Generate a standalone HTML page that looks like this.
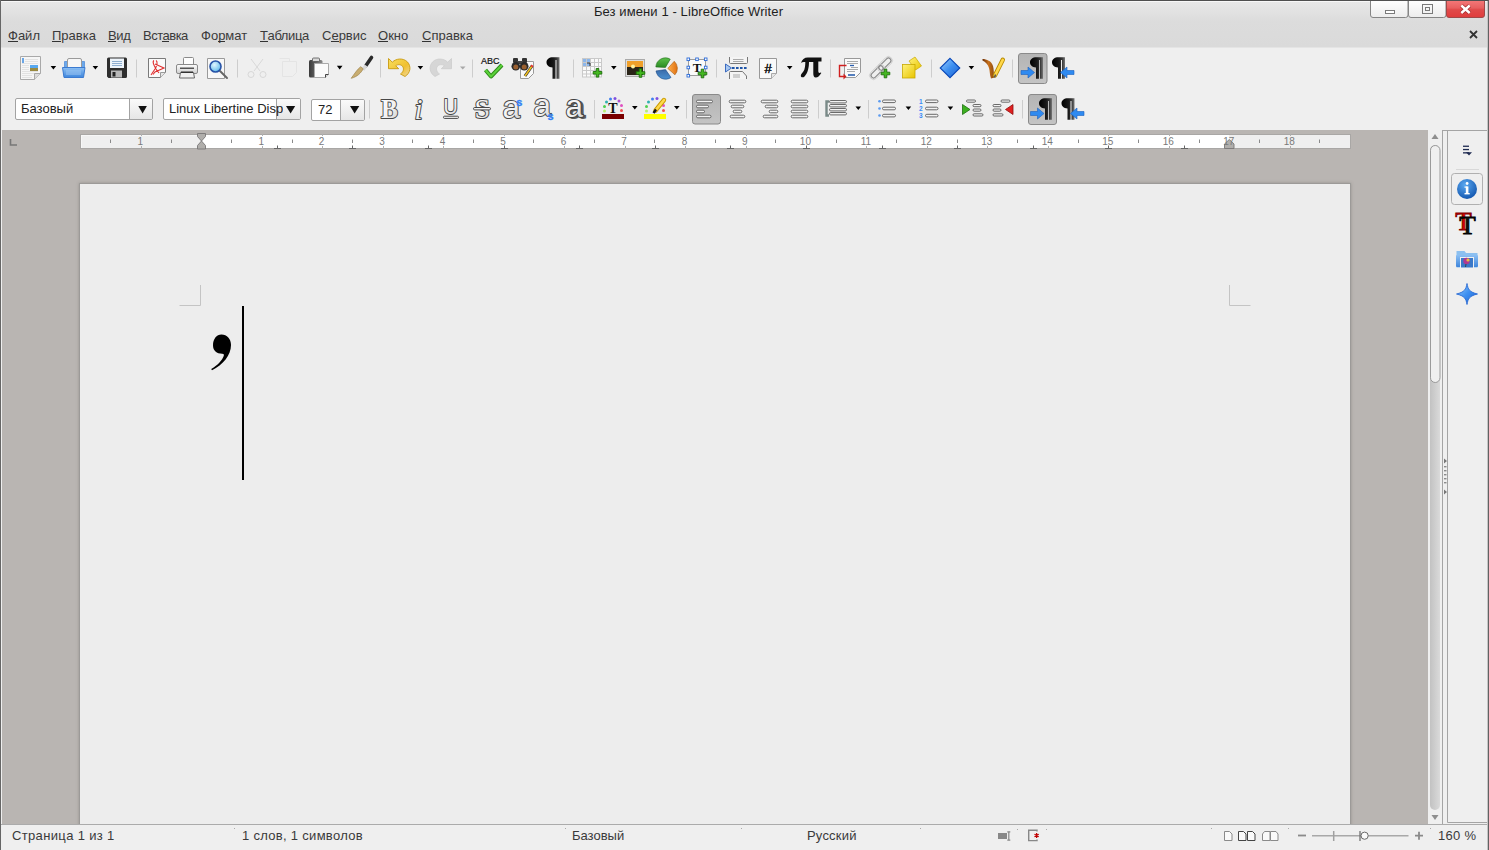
<!DOCTYPE html>
<html><head><meta charset="utf-8">
<style>
*{margin:0;padding:0;box-sizing:border-box}
html,body{width:1489px;height:850px;overflow:hidden;background:#efefef;font-family:"Liberation Sans",sans-serif;color:#222}
.a{position:absolute}
#frame{position:absolute;left:0;top:0;width:1489px;height:850px;overflow:hidden}
#titlebar{position:absolute;left:0;top:0;width:1489px;height:48px;background:linear-gradient(#f8f8f8 0px,#f8f8f8 2px,#e8e8e8 2px,#dcdcdc 21px,#dadada 47px,#e4e4e4 47px)}
#title{position:absolute;left:0;width:1377px;top:4px;line-height:16px;text-align:center;font-size:13px;color:#1e1e1e;letter-spacing:0.1px}
.menu{position:absolute;top:28px;font-size:13px;color:#3a3a3a;line-height:15px}
.menu u{text-decoration:none;position:relative}
.menu u:after{content:"";position:absolute;left:0;right:0;top:13px;height:1px;background:#333}
#tb{position:absolute;left:0;top:48px;width:1489px;height:82px;background:#efefef}
#docarea{position:absolute;left:2px;top:130px;width:1426px;height:694px;background:#b9b5b2}
#page{position:absolute;left:79px;top:183px;width:1272px;height:660px;background:#ededed;border:1px solid #9c9a98;box-shadow:0 0 3px rgba(90,85,80,0.35)}
#status{position:absolute;left:0;top:824px;width:1489px;height:26px;background:#efefef;border-top:1px solid #ababab}
.st{position:absolute;top:3px;font-size:13px;color:#3a3a3a;line-height:16px}
.combo{position:absolute;background:#fff;border:1px solid #a3a3a3;border-radius:2px;overflow:hidden}
.combo .txt{position:absolute;left:5px;top:2px;font-size:13px;color:#222;white-space:nowrap;line-height:16px}
.combo .btn{position:absolute;top:0;bottom:0;right:0;background:linear-gradient(#fafafa,#e6e6e6);border-left:1px solid #a3a3a3}
#ruler{position:absolute;left:80px;top:134px;width:1271px;height:15px;background:#fff;border:1px solid #a9a7a5}
.rn{position:absolute;top:135px;font-size:10px;color:#7c7c7c;line-height:12px}
#scroll{position:absolute;left:1428px;top:130px;width:14px;height:694px;background:#efefef}
#sidebar{position:absolute;left:1442px;top:130px;width:46px;height:694px;background:#efefef;border-top:1px solid #a4a4a4}
</style></head><body>
<div id="frame">
 <div id="titlebar"></div>
 <div id="title">Без имени 1 - LibreOffice Writer</div>
 <div class="menu" style="left:8px"><u>Ф</u>айл</div>
 <div class="menu" style="left:52px"><u>П</u>равка</div>
 <div class="menu" style="left:108px;letter-spacing:-0.4px"><u>В</u>ид</div>
 <div class="menu" style="left:143px;letter-spacing:-0.5px">Вст<u>а</u>вка</div>
 <div class="menu" style="left:201px">Фо<u>р</u>мат</div>
 <div class="menu" style="left:260px;letter-spacing:-0.4px"><u>Т</u>аблица</div>
 <div class="menu" style="left:322px">С<u>е</u>рвис</div>
 <div class="menu" style="left:378px"><u>О</u>кно</div>
 <div class="menu" style="left:422px"><u>С</u>правка</div>
 <div id="tb"></div>
 <div class="combo" style="left:15px;top:98px;width:138px;height:22px"><div class="txt">Базовый</div><div class="btn" style="width:23px"></div></div>
 <div class="combo" style="left:163px;top:98px;width:138px;height:22px"><div class="btn" style="width:24px"></div><div class="txt" style="width:114px;overflow:hidden">Linux Libertine Disp</div></div>
 <div class="combo" style="left:311px;top:99px;width:54px;height:22px"><div class="txt" style="left:6px">72</div><div class="btn" style="width:24px"></div></div>
 <div id="docarea"></div>
 <div id="ruler"></div>
 <div id="page"></div>
 <div id="scroll"></div>
 <div id="sidebar"></div>
 <div id="status">
  <div class="st" style="left:12px;letter-spacing:0.35px">Страница 1 из 1</div>
  <div class="st" style="left:242px;letter-spacing:0.3px">1 слов, 1 символов</div>
  <div class="st" style="left:572px">Базовый</div>
  <div class="st" style="left:807px;letter-spacing:0.2px">Русский</div>
  <div class="st" style="left:1438px;letter-spacing:0.3px">160 %</div>
 </div>
 <svg class="a" style="left:0;top:0" width="1489" height="850" viewBox="0 0 1489 850">
<defs>
 <linearGradient id="gBlue" x1="0" y1="0" x2="0" y2="1"><stop offset="0" stop-color="#8cc0f4"/><stop offset="1" stop-color="#3f86dc"/></linearGradient>
 <linearGradient id="gDia" x1="0" y1="0" x2="1" y2="1"><stop offset="0" stop-color="#9fd0ff"/><stop offset="0.5" stop-color="#3d8ff0"/><stop offset="1" stop-color="#1d5fcf"/></linearGradient>
 <linearGradient id="gGray" x1="0" y1="0" x2="0" y2="1"><stop offset="0" stop-color="#fdfdfd"/><stop offset="1" stop-color="#cfcfcf"/></linearGradient>
 <linearGradient id="gDark" x1="0" y1="0" x2="1" y2="0"><stop offset="0" stop-color="#3a3a3a"/><stop offset="1" stop-color="#8a8a8a"/></linearGradient>
 <linearGradient id="gPress" x1="0" y1="0" x2="0" y2="1"><stop offset="0" stop-color="#b4b4b4"/><stop offset="1" stop-color="#c4c4c4"/></linearGradient>
 <linearGradient id="gYel" x1="0" y1="0" x2="1" y2="1"><stop offset="0" stop-color="#fff27a"/><stop offset="1" stop-color="#e8c400"/></linearGradient>
 <linearGradient id="gUndo" x1="0" y1="0" x2="1" y2="1"><stop offset="0" stop-color="#f8e060"/><stop offset="0.6" stop-color="#f0c030"/><stop offset="1" stop-color="#f0d8a0"/></linearGradient>
 <linearGradient id="gPil" x1="0" y1="0" x2="1" y2="0"><stop offset="0" stop-color="#000"/><stop offset="0.55" stop-color="#1a1a1a"/><stop offset="0.8" stop-color="#3a3a3a"/><stop offset="1" stop-color="#777"/></linearGradient>
 <linearGradient id="gThumb" x1="0" y1="0" x2="1" y2="0"><stop offset="0" stop-color="#c2c2c2"/><stop offset="1" stop-color="#dadada"/></linearGradient>
 <radialGradient id="gInfo" cx="0.4" cy="0.3" r="0.8"><stop offset="0" stop-color="#5aa8f0"/><stop offset="1" stop-color="#0c4ea8"/></radialGradient>
 <radialGradient id="gLens" cx="0.4" cy="0.35" r="0.7"><stop offset="0" stop-color="#e0f6ff"/><stop offset="1" stop-color="#5ab8ea"/></radialGradient>
 <g id="plus"><path d="M-1.3,-4.3h2.6v3h3v2.6h-3v3h-2.6v-3h-3v-2.6h3z" fill="#44b820" stroke="#1d6e0a" stroke-width="0.9"/></g>
 <g id="dd"><path d="M0,0h5.6l-2.8,3.6z" fill="#000"/></g>
<linearGradient id="gGreen" x1="0" y1="0" x2="0" y2="1"><stop offset="0" stop-color="#5cc04a"/><stop offset="1" stop-color="#2a8a22"/></linearGradient>
<linearGradient id="gOr" x1="0" y1="0" x2="1" y2="0"><stop offset="0" stop-color="#ffb050"/><stop offset="1" stop-color="#e07010"/></linearGradient>
<linearGradient id="gBl2" x1="0" y1="0" x2="0" y2="1"><stop offset="0" stop-color="#3a6aa8"/><stop offset="1" stop-color="#4a90d0"/></linearGradient>
</defs>

<!-- ===== Toolbar 1 ===== -->
<!-- new doc -->
<path d="M20.5,56.5H40.5V73.5L34.5,79.5H20.5Z" fill="#f6f6f6" stroke="#a9a9a9"/>
<path d="M34.5,79.5V73.5H40.5" fill="#dcdcdc" stroke="#a9a9a9"/>
<rect x="22" y="58" width="2" height="5" fill="#6aa6e6"/>
<g stroke="#e2e2e2" stroke-width="1"><path d="M25,59.5h13M25,61.5h13M22,63.5h16M22,65.5h7M22,67.5h7M22,69.5h7M22,71.5h16M22,73.5h12M22,75.5h10M22,77.5h10"/></g>
<rect x="30" y="65" width="8" height="3" fill="#58a8ee"/><rect x="30" y="68" width="8" height="3" fill="#9a8a40"/>
<use href="#dd" x="50.6" y="66"/>
<!-- open -->
<path d="M64.5,61.5h3v7h-3zM81.5,61.5h3v7h-3z" fill="#6aa8ec" stroke="#3b7ad0" stroke-width="0.6"/>
<path d="M67.5,68.5V60a1.5,1.5 0 0 1 1.5,-1.5h11a1.5,1.5 0 0 1 1.5,1.5v8.5" fill="#f6f6f6" stroke="#9a9a9a"/>
<path d="M62.5,67.5h22.5l-1.5,10h-19.5z" fill="url(#gBlue)" stroke="#3b7ad0"/>
<rect x="66" y="70" width="15" height="5" fill="#9cc6f2" opacity="0.5"/>
<use href="#dd" x="92.6" y="66"/>
<!-- save -->
<path d="M107,59a1.5,1.5 0 0 1 1.5,-1.5h17a1.5,1.5 0 0 1 1.5,1.5v17.5a1.5,1.5 0 0 1 -1.5,1.5h-17l-1.5,-1.5z" fill="#2e2e2e"/>
<rect x="110" y="58.5" width="14" height="9.5" fill="#eef4fa"/>
<path d="M112,61.5h10M112,63.5h10M112,65.5h10" stroke="#8eaed0" stroke-width="1"/>
<rect x="111" y="70.5" width="11" height="7" fill="#b8b8b8"/><rect x="112.5" y="72" width="3" height="4.5" fill="#222"/>
<path d="M136.5,59.5v18" stroke="#cdcdcd"/>
<!-- pdf -->
<path d="M148.5,58.5H165.5V72.5L160.5,77.5H148.5Z" fill="#fafafa" stroke="#7a7a7a"/>
<path d="M160.5,77.5V72.5H165.5" fill="#e6e6e6" stroke="#9a9a9a"/>
<path d="M154,60.5c-2,1 0,5 2,8.5l3,4M156,60.5c2,1 1,5 -1,8.5l-4,6M153,74.5l2,-2.5l9,-4l-9,-4" fill="none" stroke="#e03030" stroke-width="1.1"/>
<!-- print -->
<rect x="183.5" y="57.5" width="10" height="8" rx="1" fill="#fdfdfd" stroke="#8a8a8a"/>
<rect x="176.5" y="64.5" width="21" height="9" rx="1.5" fill="url(#gGray)" stroke="#8a8a8a"/>
<rect x="180" y="67.5" width="14" height="1.5" fill="#555"/>
<path d="M180.5,72.5h13l1,5.5h-15z" fill="#f0f0f0" stroke="#666"/>
<rect x="181" y="71.5" width="12" height="1.5" fill="#333"/>
<!-- preview -->
<path d="M207.5,58.5H224.5V78.5H207.5Z" fill="#f8f8f8" stroke="#9a9a9a"/>
<path d="M220,71l7,7" stroke="#666" stroke-width="2" stroke-linecap="round"/>
<circle cx="215.5" cy="66.5" r="5.5" fill="url(#gLens)" stroke="#2854a8" stroke-width="1.6"/>
<path d="M237.5,59.5v18" stroke="#cdcdcd"/>
<!-- cut disabled -->
<g fill="none" stroke="#d8d8d8" stroke-width="1"><path d="M251,59l9,12M263,59l-9,12"/><circle cx="251" cy="74.5" r="3"/><circle cx="263" cy="74.5" r="3"/></g>
<!-- copy disabled -->
<g fill="none" stroke="#e4e4e4"><path d="M279.5,58.5h10v3M282.5,61.5h14v11l-4,4h-10z"/></g>
<!-- paste -->
<rect x="309" y="60" width="13.5" height="17.5" rx="1.5" fill="url(#gDark)"/>
<rect x="312.5" y="58" width="7" height="3.5" rx="1" fill="#d8d8d8" stroke="#555" stroke-width="0.8"/>
<path d="M314.5,63.5H328.5V74.5L325.5,77.5H314.5Z" fill="#fbfbfb" stroke="#aaa"/>
<path d="M325.5,77.5V74.5H328.5" fill="#ddd" stroke="#444"/>
<use href="#dd" x="336.9" y="65.8"/>
<!-- brush -->
<path d="M371.5,57.5l-5.5,8" stroke="#2a2a2a" stroke-width="3.6" stroke-linecap="round"/>
<path d="M366,65.5l-3,4.2" stroke="#d8d8d8" stroke-width="3.4"/>
<path d="M363.2,68.8c-2,4 -6,8 -12,9.5c3,-4 6,-9 9.5,-11.6z" fill="#c8ad70" stroke="#9e8348" stroke-width="0.7"/>
<path d="M380.5,59.5v18" stroke="#cdcdcd"/>
<!-- undo -->
<path d="M388.5,58.5L392.3,62.2C396,58.5 403,57.5 407.5,62C411.5,66.5 410.5,73 405,76.5L400.5,74C403.5,72 404.3,68.5 402.5,66.3C400.5,64 397.5,64.3 395.7,65.8L398.7,68.7L388.5,68.7Z" fill="url(#gUndo)" stroke="#c89a10" stroke-width="0.9" stroke-linejoin="round"/>
<use href="#dd" x="417.6" y="66"/>
<!-- redo disabled -->
<path d="M388.5,58.5L392.3,62.2C396,58.5 403,57.5 407.5,62C411.5,66.5 410.5,73 405,76.5L400.5,74C403.5,72 404.3,68.5 402.5,66.3C400.5,64 397.5,64.3 395.7,65.8L398.7,68.7L388.5,68.7Z" transform="translate(840 0) scale(-1 1)" fill="#d6d6d6" stroke="#cacaca" stroke-width="0.7"/>
<path d="M460,66.5h5.5l-2.75,3z" fill="#a8a8a8"/>
<path d="M472.5,59.5v18" stroke="#cdcdcd"/>
<!-- spell -->
<text x="481" y="63.9" font-family="Liberation Sans" font-size="9" fill="#111" stroke="#111" stroke-width="0.2">ABC</text>
<path d="M485.5,70l5.5,6.5l11,-11.5" fill="none" stroke="#2f8a1a" stroke-width="4" stroke-linejoin="round"/>
<path d="M485.5,70l5.5,6.5l11,-11.5" fill="none" stroke="#5bd23a" stroke-width="2" stroke-linejoin="round"/>
<!-- find replace -->
<path d="M520.5,61.5h13v12l-5,5h-8z" fill="#fafafa" stroke="#9a9a9a"/>
<path d="M532,66l-7,10" stroke="#333" stroke-width="3"/><path d="M532,66l-7,10" stroke="#f0c020" stroke-width="1.6"/><path d="M532.5,65.3l-1,1.4" stroke="#e03030" stroke-width="2.6"/>
<rect x="513" y="58" width="5" height="5" rx="1" fill="#333"/><rect x="522" y="58" width="5" height="5" rx="1" fill="#333"/><rect x="517" y="61" width="6" height="3" fill="#444"/>
<circle cx="515.8" cy="66.3" r="4.3" fill="#2a2a2a"/><circle cx="524.2" cy="66.3" r="4.3" fill="#2a2a2a"/>
<circle cx="515.8" cy="67" r="2.5" fill="#9a6030"/><circle cx="524.2" cy="67" r="2.5" fill="#9a6030"/>
<!-- pilcrow -->
<path d="M553,57.2H559.5V78.8H556.5V60H555.5V78.8H552.5V67.5C548.5,67.5 546.5,65 546.5,62.3C546.5,59.3 549,57.2 553,57.2Z" fill="url(#gPil)"/>
<path d="M573.5,59.5v18" stroke="#cdcdcd"/>
<!-- table -->
<g stroke="#c9c9c9" stroke-width="1" fill="#fafafa"><rect x="582.5" y="58.5" width="19" height="18.5"/></g>
<rect x="583" y="59" width="8" height="7" fill="#8cb6ea"/>
<g stroke="#c9c9c9"><path d="M586.5,58.5v18.5M590.5,58.5v18.5M594.5,58.5v18.5M598.5,58.5v18.5M582.5,62.5h19M582.5,66.5h19M582.5,70.5h19M582.5,74h19"/></g>
<path d="M587,63h3v3" stroke="#333" fill="none"/>
<use href="#plus" x="597.5" y="72.8"/>
<use href="#dd" x="611" y="66"/>
<!-- image -->
<rect x="625.5" y="59.5" width="19" height="17" fill="#ddd" stroke="#aaa"/>
<rect x="627" y="61" width="16" height="6" fill="#f0a02a"/><rect x="627" y="67" width="16" height="8" fill="#2a2418"/>
<circle cx="633" cy="66.5" r="2" fill="#fff2a0"/>
<use href="#plus" x="640.5" y="73"/>
<!-- chart -->
<path d="M665.43,67.45L655.84,66.94A9.6,9.6 0 0 1 670.23,59.13Z" fill="url(#gGreen)" stroke="#1e6a18" stroke-width="0.6"/>
<path d="M667.80,68.41L674.22,61.27A9.6,9.6 0 0 1 674.93,74.83Z" fill="url(#gOr)" stroke="#a85a10" stroke-width="0.6"/>
<path d="M665.52,69.60L671.03,77.46A9.6,9.6 0 0 1 656.01,70.94Z" fill="url(#gBl2)" stroke="#1a4a88" stroke-width="0.6"/>
<!-- text box -->
<rect x="688.5" y="59.5" width="17" height="16" fill="#fbfbfb" stroke="#888" stroke-width="0.8"/>
<text x="697" y="72" font-family="Liberation Serif" font-weight="bold" font-size="13" text-anchor="middle" fill="#111">T</text>
<g fill="#fff" stroke="#2a6ad8" stroke-width="0.9"><rect x="687" y="58" width="2.6" height="2.6"/><rect x="695.7" y="58" width="2.6" height="2.6"/><rect x="704.4" y="58" width="2.6" height="2.6"/><rect x="687" y="66.2" width="2.6" height="2.6"/><rect x="704.4" y="66.2" width="2.6" height="2.6"/><rect x="687" y="74.4" width="2.6" height="2.6"/></g>
<use href="#plus" x="702.5" y="73.5"/>
<path d="M716.5,59.5v18" stroke="#cdcdcd"/>
<!-- page break -->
<path d="M729.5,57v5.5a1,1 0 0 0 1,1h16a1,1 0 0 0 1,-1V57" fill="#f4f4f4" stroke="#777"/>
<path d="M733,59.5h10.5M733,61.5h10.5" stroke="#aaa"/>
<path d="M732,68h16" stroke="#1f55a8" stroke-width="1.8" stroke-dasharray="2.6,1.4"/>
<path d="M725.5,64l6,4l-6,4z" fill="#a8c8f0" stroke="#3a6ac0"/>
<path d="M729.5,79v-6.5a1,1 0 0 1 1,-1h12l4,4.5v3" fill="#f4f4f4" stroke="#777"/>
<path d="M733,75h7M733,77h7" stroke="#aaa"/>
<!-- field -->
<path d="M759.5,58.5H776.5V73.5L771.5,78.5H759.5Z" fill="#fafafa" stroke="#999"/>
<path d="M771.5,78.5V73.5H776.5" fill="#e6e6e6" stroke="#aaa"/>
<text x="768" y="72.5" font-family="Liberation Sans" font-size="13" text-anchor="middle" fill="#000" stroke="#000" stroke-width="0.4">#</text>
<use href="#dd" x="786.9" y="66"/>
<!-- pi -->
<path d="M801,63c1,-4 4,-6 8,-5.5h12.5v4h-3.2v9.5c0,2 1,2.5 2.5,1.5l0.5,0.6c-2,3 -3.5,4.5 -5.5,4.5c-2,0 -2.5,-2 -2.5,-4v-11.6h-4.3c0,5 -1,11 -4.5,14.5c-1.2,1.2 -3.5,1.3 -3.7,-0.8c0,-2 2.5,-3.5 3.5,-6c0.8,-2.5 1,-5 1,-7.7h-1.5c-2.2,0 -3.2,1 -3.8,2.3z" fill="#111"/>
<path d="M830.5,59.5v18" stroke="#cdcdcd"/>
<!-- cross ref -->
<path d="M844.5,58.5H860.5V72.5L855.5,77.5H844.5Z" fill="#fafafa" stroke="#999"/>
<g stroke="#aaa"><path d="M847,61.5h11M847,63.5h11M851,67.5h7M847,69.5h11M847,71.5h8"/></g>
<path d="M850,65.5h4" stroke="#2a5fb0" stroke-width="1.3"/><path d="M848,75h7" stroke="#2a5fb0" stroke-width="1.6"/>
<path d="M846.5,65.5h-7v11h5" fill="none" stroke="#d02020" stroke-width="1.4"/>
<path d="M843.5,73.5l3,3l-3,3z" fill="#d02020"/>
<!-- hyperlink disabled-ish -->
<g fill="none" stroke="#8a8a8a" stroke-width="1.2" transform="rotate(-45 881 68)">
 <rect x="868" y="65.5" width="15" height="5" rx="2.5"/><rect x="879" y="65.5" width="15" height="5" rx="2.5"/>
</g>
<g fill="none" stroke="#c8c8c8" stroke-width="0.8" transform="rotate(-45 881 68)"><rect x="866.5" y="64" width="18" height="8" rx="4"/><rect x="877.5" y="64" width="18" height="8" rx="4"/></g>
<use href="#plus" x="885.5" y="73.5"/>
<!-- note -->
<path d="M909,61l6,-4l6.5,9l-6,4z" fill="url(#gYel)" stroke="#c8a800" stroke-width="0.7"/>
<rect x="902.5" y="64.5" width="12.5" height="13.5" fill="url(#gYel)" stroke="#c8a800" stroke-width="0.8"/>
<path d="M931.5,59.5v18" stroke="#cdcdcd"/>
<!-- diamond -->
<path d="M950,58.3L959.8,68L950,77.7L940.2,68Z" fill="url(#gDia)" stroke="#0a48b8" stroke-width="1.1"/>
<use href="#dd" x="968.6" y="66"/>
<!-- draw function -->
<linearGradient id="gBrown" x1="0" y1="0" x2="1" y2="0"><stop offset="0" stop-color="#6a3008"/><stop offset="0.5" stop-color="#c8701a"/><stop offset="1" stop-color="#8a4a10"/></linearGradient>
<path d="M982.5,59c4,0 9,2 10.5,7c1,3 0.5,7 1.5,11.5l-3.5,1c-1.5,-4 -1,-8 -2,-10.5c-1,-3.5 -3.5,-6 -6.5,-7.5z" fill="url(#gBrown)"/>
<path d="M1002.8,59.8l-7.8,15.5" stroke="#b88a00" stroke-width="4.4" stroke-linecap="round"/>
<path d="M1002.8,59.8l-7.8,15.5" stroke="#ffd84a" stroke-width="2.6" stroke-linecap="round"/>
<path d="M995.5,74.5l-1,3" stroke="#555" stroke-width="1.5"/>
<path d="M1012.5,59.5v18" stroke="#cdcdcd"/>
<!-- LTR pressed -->
<rect x="1018.5" y="53.5" width="28.5" height="30" rx="2.5" fill="url(#gPress)" stroke="#8a8a8a"/>
<path d="M1036.5,57.2H1043V78.8H1040V60H1039V78.8H1036V67.5C1032,67.5 1030,65 1030,62.3C1030,59.3 1032.5,57.2 1036.5,57.2Z" fill="url(#gPil)"/>
<path d="M1021,70.5h7v-3.5l6.5,5.5l-6.5,5.5v-3.5h-7z" fill="#2f8af0" stroke="#1a60c0" stroke-width="0.6"/>
<!-- RTL -->
<path d="M1058.5,57.2H1065V78.8H1062V60H1061V78.8H1058V67.5C1054,67.5 1052,65 1052,62.3C1052,59.3 1054.5,57.2 1058.5,57.2Z" fill="url(#gPil)"/>
<path d="M1074,70.5h-7v-3.5l-6.5,5.5l6.5,5.5v-3.5h7z" fill="#2f8af0" stroke="#1a60c0" stroke-width="0.6"/>

<!-- ===== Toolbar 2 ===== -->
<path d="M138.3,106h8.6l-4.3,7.5z" fill="#111"/>
<path d="M286,106h9.2l-4.6,7.6z" fill="#111"/>
<path d="M350,106h9.3l-4.65,7.6z" fill="#111"/>
<path d="M369.5,100v18.5" stroke="#cdcdcd"/>
<linearGradient id="gLet" x1="0" y1="0" x2="1" y2="1"><stop offset="0" stop-color="#ffffff"/><stop offset="0.6" stop-color="#f0f0f0"/><stop offset="1" stop-color="#c8c8c8"/></linearGradient>
<g fill="url(#gLet)" stroke="#474747" stroke-width="2" paint-order="stroke" stroke-linejoin="round">
 <text x="381" y="118" font-family="Liberation Serif" font-weight="bold" font-size="27.5" transform="translate(381 0) scale(0.92 1) translate(-381 0)">B</text>
 <text x="414.5" y="118.8" font-family="Liberation Serif" font-style="italic" font-size="29">i</text>
 <text x="443.5" y="114.2" font-family="Liberation Sans" font-size="22" transform="translate(443.5 0) scale(0.9 1) translate(-443.5 0)">U</text>
 <text x="474.5" y="118" font-family="Liberation Serif" font-size="28">S</text>
 <text x="502.5" y="118" font-family="Liberation Sans" font-size="31.5">a</text>
 <text x="533.5" y="116" font-family="Liberation Sans" font-size="31.5">a</text>
</g>
<rect x="443.5" y="116.2" width="15" height="2.2" rx="1" fill="#f4f4f4" stroke="#474747" stroke-width="1"/>
<rect x="473.5" y="107.5" width="17" height="2.4" rx="1.2" fill="#f4f4f4" stroke="#474747" stroke-width="1"/>
<text x="516.3" y="106.2" font-family="Liberation Sans" font-weight="bold" font-size="11" fill="#2f80f5" stroke="#2f80f5" stroke-width="0.3">s</text>
<text x="547.5" y="119.5" font-family="Liberation Sans" font-weight="bold" font-size="11" fill="#2f80f5" stroke="#2f80f5" stroke-width="0.3">s</text>
<text x="567.5" y="118.3" font-family="Liberation Sans" font-size="31.5" fill="#5a5a5a" stroke="#5a5a5a" stroke-width="2">a</text>
<text x="565.5" y="116.8" font-family="Liberation Sans" font-size="31.5" fill="url(#gLet)" stroke="#404040" stroke-width="2" paint-order="stroke">a</text>
<path d="M594.5,100v18.5" stroke="#cdcdcd"/>
<!-- font color -->
<g><circle cx="604.5" cy="111" r="1.5" fill="#b8f070"/><circle cx="604.5" cy="106.5" r="1.5" fill="#50d050"/><circle cx="606.5" cy="102" r="1.5" fill="#30b0b0"/><circle cx="610.5" cy="99" r="1.5" fill="#4080f0"/><circle cx="615" cy="98.5" r="1.5" fill="#8050e0"/><circle cx="619" cy="101" r="1.5" fill="#b050d0"/><circle cx="621.5" cy="105.5" r="1.5" fill="#e050c0"/><circle cx="621.5" cy="110.5" r="1.5" fill="#f05050"/></g>
<text x="613" y="112.5" font-family="Liberation Serif" font-weight="bold" font-size="14" text-anchor="middle" fill="#111">T</text>
<rect x="602" y="114" width="22" height="5" fill="#7a0000"/>
<use href="#dd" x="632" y="106"/>
<!-- highlight -->
<g><circle cx="646.5" cy="111" r="1.5" fill="#b8f070"/><circle cx="646.5" cy="106.5" r="1.5" fill="#50d050"/><circle cx="648.5" cy="102" r="1.5" fill="#30b0b0"/><circle cx="652.5" cy="99" r="1.5" fill="#4080f0"/><circle cx="657" cy="98.5" r="1.5" fill="#8050e0"/><circle cx="663.5" cy="105.5" r="1.5" fill="#e050c0"/><circle cx="663.5" cy="110.5" r="1.5" fill="#f05050"/></g>
<path d="M664,100l-8.5,10.5" stroke="#c89a00" stroke-width="4.4" stroke-linecap="round"/>
<path d="M664,100l-8.5,10.5" stroke="#ffd84a" stroke-width="2.6" stroke-linecap="round"/>
<path d="M656,109.5l-2.5,3.5" stroke="#111" stroke-width="2.5"/>
<rect x="644" y="114" width="22" height="5" fill="#ffff00"/>
<use href="#dd" x="674" y="106"/>
<path d="M686.5,100v18.5" stroke="#cdcdcd"/>
<!-- align pressed -->
<rect x="692.5" y="94.5" width="28" height="29.5" rx="2.5" fill="url(#gPress)" stroke="#8a8a8a"/>
<g fill="#f2f2f2" stroke="#5a5a5a" stroke-width="0.9">
 <rect x="696.5" y="100.2" width="16" height="2.6" rx="1.3"/><rect x="696.5" y="105.2" width="12" height="2.6" rx="1.3"/><rect x="696.5" y="110.2" width="8" height="2.6" rx="1.3"/><rect x="696.5" y="115.2" width="14.5" height="2.6" rx="1.3"/>
 <rect x="729.2" y="100.2" width="16.6" height="2.6" rx="1.3"/><rect x="731.2" y="105.2" width="12.6" height="2.6" rx="1.3"/><rect x="733.2" y="110.2" width="8.6" height="2.6" rx="1.3"/><rect x="730.2" y="115.2" width="14.6" height="2.6" rx="1.3"/>
 <rect x="761.2" y="100.2" width="16.6" height="2.6" rx="1.3"/><rect x="765.2" y="105.2" width="12.6" height="2.6" rx="1.3"/><rect x="769.2" y="110.2" width="8.6" height="2.6" rx="1.3"/><rect x="763.2" y="115.2" width="14.6" height="2.6" rx="1.3"/>
 <rect x="791.2" y="100.2" width="16.6" height="2.6" rx="1.3"/><rect x="791.2" y="105.2" width="16.6" height="2.6" rx="1.3"/><rect x="791.2" y="110.2" width="16.6" height="2.6" rx="1.3"/><rect x="791.2" y="115.2" width="16.6" height="2.6" rx="1.3"/>
</g>
<path d="M818.5,100v18.5" stroke="#cdcdcd"/>
<!-- line spacing -->
<path d="M829,101.5h-2.5v14h2.5" fill="none" stroke="#7a8a88" stroke-width="2.4"/>
<g fill="#f2f2f2" stroke="#5a5a5a" stroke-width="0.9">
 <rect x="829.5" y="100.5" width="17" height="2.4" rx="1.2"/><rect x="829.5" y="104.5" width="17" height="2.4" rx="1.2"/><rect x="829.5" y="108.5" width="17" height="2.4" rx="1.2"/><rect x="829.5" y="112.5" width="17" height="2.4" rx="1.2"/>
</g>
<use href="#dd" x="855.5" y="106.5"/>
<path d="M868.5,100v18.5" stroke="#cdcdcd"/>
<!-- bullets -->
<g fill="#5a9af0"><circle cx="879.5" cy="101.3" r="1.3"/><circle cx="879.5" cy="108.5" r="1.3"/><circle cx="879.5" cy="115.5" r="1.3"/></g>
<g fill="#f2f2f2" stroke="#5a5a5a" stroke-width="0.9"><rect x="882.5" y="100" width="13" height="2.6" rx="1.3"/><rect x="882.5" y="107.2" width="13" height="2.6" rx="1.3"/><rect x="882.5" y="114.3" width="13" height="2.6" rx="1.3"/></g>
<use href="#dd" x="905.6" y="106.5"/>
<!-- numbering -->
<g font-family="Liberation Sans" font-weight="bold" font-size="6.5" fill="#3a8af8"><text x="919" y="104">1</text><text x="919" y="111">2</text><text x="919" y="118">3</text></g>
<g fill="#f2f2f2" stroke="#5a5a5a" stroke-width="0.9"><rect x="925.5" y="100" width="12.5" height="2.6" rx="1.3"/><rect x="925.5" y="107.2" width="12.5" height="2.6" rx="1.3"/><rect x="925.5" y="114.3" width="12.5" height="2.6" rx="1.3"/></g>
<use href="#dd" x="947.6" y="106.5"/>
<!-- indent increase -->
<path d="M962.5,104.5l7.5,5l-7.5,5z" fill="#3cb020" stroke="#1e7010" stroke-width="0.8"/>
<g fill="#f2f2f2" stroke="#5a5a5a" stroke-width="0.9"><rect x="966.5" y="100" width="9" height="2.2" rx="1.1"/><rect x="973" y="104.5" width="8" height="2.2" rx="1.1"/><rect x="973" y="109" width="8" height="2.2" rx="1.1"/><rect x="973" y="113.8" width="10" height="2.2" rx="1.1"/></g>
<!-- indent decrease -->
<path d="M1013,104.5l-7.5,5l7.5,5z" fill="#e02020" stroke="#901010" stroke-width="0.8"/>
<g fill="#f2f2f2" stroke="#5a5a5a" stroke-width="0.9"><rect x="1001" y="100" width="9" height="2.2" rx="1.1"/><rect x="993" y="104.5" width="8" height="2.2" rx="1.1"/><rect x="993" y="109" width="8" height="2.2" rx="1.1"/><rect x="993" y="113.8" width="10" height="2.2" rx="1.1"/></g>
<path d="M1022.5,100v18.5" stroke="#cdcdcd"/>
<!-- LTR pressed 2 -->
<rect x="1028.5" y="94.5" width="28" height="30" rx="2.5" fill="url(#gPress)" stroke="#8a8a8a"/>
<path d="M1045.5,98.2H1052V119.8H1049V101H1048V119.8H1045V108.5C1041,108.5 1039,106 1039,103.3C1039,100.3 1041.5,98.2 1045.5,98.2Z" fill="url(#gPil)"/>
<path d="M1030.5,111.5h7v-3.5l6.5,5.5l-6.5,5.5v-3.5h-7z" fill="#2f8af0" stroke="#1a60c0" stroke-width="0.6"/>
<!-- RTL 2 -->
<path d="M1068,98.2H1074.5V119.8H1071.5V101H1070.5V119.8H1067.5V108.5C1063.5,108.5 1061.5,106 1061.5,103.3C1061.5,100.3 1064,98.2 1068,98.2Z" fill="url(#gPil)"/>
<path d="M1084,111.5h-7v-3.5l-6.5,5.5l6.5,5.5v-3.5h7z" fill="#2f8af0" stroke="#1a60c0" stroke-width="0.6"/>

<!-- ===== window buttons ===== -->
<linearGradient id="gWin" x1="0" y1="0" x2="0" y2="1"><stop offset="0" stop-color="#ffffff"/><stop offset="1" stop-color="#ececec"/></linearGradient>
<linearGradient id="gClose" x1="0" y1="0" x2="0" y2="1"><stop offset="0" stop-color="#f47a7a"/><stop offset="0.45" stop-color="#e86060"/><stop offset="0.55" stop-color="#e04a4a"/><stop offset="1" stop-color="#e03c3c"/></linearGradient>
<path d="M1370.5,0V15a2.5,2.5 0 0 0 2.5,2.5h32.5a2.5,2.5 0 0 0 2.5,-2.5V0z" fill="url(#gWin)" stroke="#858585"/>
<path d="M1408.5,0V15a2.5,2.5 0 0 0 2.5,2.5h32.5a2.5,2.5 0 0 0 2.5,-2.5V0z" fill="url(#gWin)" stroke="#858585"/>
<path d="M1446.5,0V15a2.5,2.5 0 0 0 2.5,2.5h33a2.5,2.5 0 0 0 2.5,-2.5V0z" fill="url(#gClose)" stroke="#a04848"/>
<rect x="1385.5" y="10.5" width="9" height="3" fill="#fff" stroke="#7a7a7a" stroke-width="1"/>
<rect x="1422.5" y="4.5" width="10" height="9" fill="none" stroke="#7a7a7a" stroke-width="1"/><rect x="1425.5" y="7.5" width="4" height="3" fill="none" stroke="#7a7a7a" stroke-width="1"/>
<path d="M1461.3,5.5l8.4,7.5M1469.7,5.5l-8.4,7.5" stroke="#a83030" stroke-width="4.2"/>
<path d="M1461.3,5.5l8.4,7.5M1469.7,5.5l-8.4,7.5" stroke="#fff" stroke-width="2.4"/>
<path d="M1485,0h4v4c0,-2 -2,-4 -4,-4z" fill="#1a5a9a"/>
<path d="M0,0h3c-2,0 -3,1 -3,3z" fill="#1a5a9a"/>
<path d="M1470,31l7,7M1477,31l-7,7" stroke="#333" stroke-width="1.8"/>

<!-- ===== ruler ===== -->
<path d="M81,135h120v13h-120z" fill="#efefef"/><path d="M81,135.5h120M81.5,135v13" stroke="#f7f7f7"/>
<path d="M1229,135h121v13h-121z" fill="#efefef"/>
<path d="M10.5,139v6h6.5" fill="none" stroke="#777" stroke-width="1.6"/>
<path d="M197.5,133.5h8v3l-4,4.5l4,4.5v3.5h-8v-3.5l4,-4.5l-4,-4.5z" fill="#b0aeab" stroke="#787676" stroke-width="0.9"/>
<path d="M1224.5,148.5h9.5v-4.5l-4.75,-4.5l-4.75,4.5z" fill="#b0aeab" stroke="#787676" stroke-width="0.9"/>
<text x="140.2" y="145" font-family="Liberation Sans" font-size="10" text-anchor="middle" fill="#7a7a7a">1</text>
<path d="M141.5,134v2M141.5,146v3" stroke="#b0b0b0"/>
<text x="261.2" y="145" font-family="Liberation Sans" font-size="10" text-anchor="middle" fill="#7a7a7a">1</text>
<path d="M262.5,134v2M262.5,146v3" stroke="#b0b0b0"/>
<text x="321.6" y="145" font-family="Liberation Sans" font-size="10" text-anchor="middle" fill="#7a7a7a">2</text>
<path d="M322.5,134v2M322.5,146v3" stroke="#b0b0b0"/>
<text x="382.1" y="145" font-family="Liberation Sans" font-size="10" text-anchor="middle" fill="#7a7a7a">3</text>
<path d="M383.5,134v2M383.5,146v3" stroke="#b0b0b0"/>
<text x="442.6" y="145" font-family="Liberation Sans" font-size="10" text-anchor="middle" fill="#7a7a7a">4</text>
<path d="M443.5,134v2M443.5,146v3" stroke="#b0b0b0"/>
<text x="503.1" y="145" font-family="Liberation Sans" font-size="10" text-anchor="middle" fill="#7a7a7a">5</text>
<path d="M504.5,134v2M504.5,146v3" stroke="#b0b0b0"/>
<text x="563.5" y="145" font-family="Liberation Sans" font-size="10" text-anchor="middle" fill="#7a7a7a">6</text>
<path d="M564.5,134v2M564.5,146v3" stroke="#b0b0b0"/>
<text x="624.0" y="145" font-family="Liberation Sans" font-size="10" text-anchor="middle" fill="#7a7a7a">7</text>
<path d="M625.5,134v2M625.5,146v3" stroke="#b0b0b0"/>
<text x="684.5" y="145" font-family="Liberation Sans" font-size="10" text-anchor="middle" fill="#7a7a7a">8</text>
<path d="M685.5,134v2M685.5,146v3" stroke="#b0b0b0"/>
<text x="744.9" y="145" font-family="Liberation Sans" font-size="10" text-anchor="middle" fill="#7a7a7a">9</text>
<path d="M746.5,134v2M746.5,146v3" stroke="#b0b0b0"/>
<text x="805.4" y="145" font-family="Liberation Sans" font-size="10" text-anchor="middle" fill="#7a7a7a">10</text>
<path d="M806.5,134v2M806.5,146v3" stroke="#b0b0b0"/>
<text x="865.9" y="145" font-family="Liberation Sans" font-size="10" text-anchor="middle" fill="#7a7a7a">11</text>
<path d="M866.5,134v2M866.5,146v3" stroke="#b0b0b0"/>
<text x="926.3" y="145" font-family="Liberation Sans" font-size="10" text-anchor="middle" fill="#7a7a7a">12</text>
<path d="M927.5,134v2M927.5,146v3" stroke="#b0b0b0"/>
<text x="986.8" y="145" font-family="Liberation Sans" font-size="10" text-anchor="middle" fill="#7a7a7a">13</text>
<path d="M987.5,134v2M987.5,146v3" stroke="#b0b0b0"/>
<text x="1047.3" y="145" font-family="Liberation Sans" font-size="10" text-anchor="middle" fill="#7a7a7a">14</text>
<path d="M1048.5,134v2M1048.5,146v3" stroke="#b0b0b0"/>
<text x="1107.8" y="145" font-family="Liberation Sans" font-size="10" text-anchor="middle" fill="#7a7a7a">15</text>
<path d="M1108.5,134v2M1108.5,146v3" stroke="#b0b0b0"/>
<text x="1168.2" y="145" font-family="Liberation Sans" font-size="10" text-anchor="middle" fill="#7a7a7a">16</text>
<path d="M1169.5,134v2M1169.5,146v3" stroke="#b0b0b0"/>
<text x="1228.7" y="145" font-family="Liberation Sans" font-size="10" text-anchor="middle" fill="#7a7a7a">17</text>
<text x="1289.2" y="145" font-family="Liberation Sans" font-size="10" text-anchor="middle" fill="#7a7a7a">18</text>
<path d="M1290.5,134v2M1290.5,146v3" stroke="#b0b0b0"/>
<path d="M110.5,139.5v3.5" stroke="#8a8a8a"/>
<path d="M171.5,139.5v3.5" stroke="#8a8a8a"/>
<path d="M231.5,139.5v3.5" stroke="#8a8a8a"/>
<path d="M292.5,139.5v3.5" stroke="#8a8a8a"/>
<path d="M352.5,139.5v3.5" stroke="#8a8a8a"/>
<path d="M412.5,139.5v3.5" stroke="#8a8a8a"/>
<path d="M473.5,139.5v3.5" stroke="#8a8a8a"/>
<path d="M533.5,139.5v3.5" stroke="#8a8a8a"/>
<path d="M594.5,139.5v3.5" stroke="#8a8a8a"/>
<path d="M654.5,139.5v3.5" stroke="#8a8a8a"/>
<path d="M715.5,139.5v3.5" stroke="#8a8a8a"/>
<path d="M775.5,139.5v3.5" stroke="#8a8a8a"/>
<path d="M836.5,139.5v3.5" stroke="#8a8a8a"/>
<path d="M896.5,139.5v3.5" stroke="#8a8a8a"/>
<path d="M957.5,139.5v3.5" stroke="#8a8a8a"/>
<path d="M1017.5,139.5v3.5" stroke="#8a8a8a"/>
<path d="M1078.5,139.5v3.5" stroke="#8a8a8a"/>
<path d="M1138.5,139.5v3.5" stroke="#8a8a8a"/>
<path d="M1199.5,139.5v3.5" stroke="#8a8a8a"/>
<path d="M1259.5,139.5v3.5" stroke="#8a8a8a"/>
<path d="M1319.5,139.5v3.5" stroke="#8a8a8a"/>
<path d="M277.5,145.5v3M274.0,148.5h7" stroke="#666"/>
<path d="M352.5,145.5v3M349.0,148.5h7" stroke="#666"/>
<path d="M428.5,145.5v3M425.0,148.5h7" stroke="#666"/>
<path d="M504.5,145.5v3M501.0,148.5h7" stroke="#666"/>
<path d="M579.5,145.5v3M576.0,148.5h7" stroke="#666"/>
<path d="M655.5,145.5v3M652.0,148.5h7" stroke="#666"/>
<path d="M730.5,145.5v3M727.0,148.5h7" stroke="#666"/>
<path d="M806.5,145.5v3M803.0,148.5h7" stroke="#666"/>
<path d="M882.5,145.5v3M879.0,148.5h7" stroke="#666"/>
<path d="M957.5,145.5v3M954.0,148.5h7" stroke="#666"/>
<path d="M1033.5,145.5v3M1030.0,148.5h7" stroke="#666"/>
<path d="M1108.5,145.5v3M1105.0,148.5h7" stroke="#666"/>
<path d="M1184.5,145.5v3M1181.0,148.5h7" stroke="#666"/>

<!-- ===== page content ===== -->
<path d="M200.5,285v20.5h-21" fill="none" stroke="#c4c4c4"/>
<path d="M1229.5,285v20.5h21" fill="none" stroke="#c4c4c4"/>
<path d="M221.5,334.5c5.5,0 9.5,4.5 9.5,10.5c0,10 -8,20 -19,25.3l-0.8,-1.3c7,-4 11,-9 12.5,-13c0.5,-1.5 0,-2.3 -1.5,-2.3c-5.5,0 -9.2,-3 -9.2,-8.5c0,-6 3.5,-10.7 8.5,-10.7z" fill="#000"/>
<rect x="242" y="306" width="2" height="174" fill="#000"/>

<!-- ===== scrollbar ===== -->
<path d="M1435,134l3.5,5h-7z" fill="#8e8e8e"/>
<path d="M1435,820l3.5,-5h-7z" fill="#8e8e8e"/>
<rect x="1430" y="145" width="10" height="665" rx="5" fill="url(#gThumb)"/>
<rect x="1430.5" y="145.5" width="9.5" height="237" rx="4.75" fill="#efefef" stroke="#9a9a9a"/>
<path d="M1442.5,130v694M1447.5,130v692.5h40" fill="none" stroke="#a4a4a4"/>
<path d="M1444,458.5l3,2.5l-3,2.5zM1444,489.5l3,2.5l-3,2.5z" fill="#777"/>
<g fill="#8a8a8a"><rect x="1444" y="466" width="2.5" height="1.4"/><rect x="1444" y="470" width="2.5" height="1.4"/><rect x="1444" y="474" width="2.5" height="1.4"/><rect x="1444" y="478" width="2.5" height="1.4"/><rect x="1444" y="482" width="2.5" height="1.4"/></g>

<!-- ===== sidebar ===== -->
<g fill="#1e2a50"><rect x="1463" y="145.6" width="6" height="1.3"/><rect x="1463" y="148.9" width="6" height="1.3"/><rect x="1463" y="152.2" width="6" height="1.3"/><path d="M1466,152.3h6l-3,3.3z"/></g>
<path d="M1456,169.5h23" stroke="#d8d8d8"/>
<rect x="1451.5" y="173.5" width="31" height="31" rx="3" fill="none" stroke="#a8a8a8" stroke-width="0.9"/>
<circle cx="1467" cy="189" r="10" fill="url(#gInfo)"/>
<rect x="1465.8" y="186.5" width="2.6" height="7" fill="#fff"/><rect x="1464.5" y="193" width="5.2" height="1.4" fill="#fff"/><rect x="1464.5" y="186.5" width="3" height="1.2" fill="#fff"/><circle cx="1467.1" cy="183.5" r="1.4" fill="#fff"/>
<text x="1455.3" y="230" font-family="Liberation Serif" font-size="25.5" transform="translate(1455.3 0) scale(1.06 1) translate(-1455.3 0)" fill="#e00000" stroke="#800000" stroke-width="0.8">T</text>
<text x="1459.3" y="234.2" font-family="Liberation Serif" font-size="25.5" transform="translate(1459.3 0) scale(1.06 1) translate(-1459.3 0)" fill="#111" stroke="#000" stroke-width="0.8">T</text>
<path d="M1456.5,251h8l1.5,2h11.5v14.5h-21z" fill="#8cc0f0"/>
<rect x="1456" y="255" width="22" height="12" rx="1" fill="url(#gBlue)"/>
<rect x="1460.5" y="257.5" width="13" height="10.5" fill="#3a78c8" stroke="#f0f0f0" stroke-width="1"/>
<circle cx="1466.5" cy="261" r="3.2" fill="#b03890"/><circle cx="1468" cy="260" r="1.6" fill="#e8c040"/><path d="M1466,264l-0.5,3" stroke="#333" stroke-width="0.8"/>
<path d="M1467,283.5c1,6 2.5,8.5 10.5,10.5c-8,2 -9.5,4.5 -10.5,10.5c-1,-6 -2.5,-8.5 -10.5,-10.5c8,-2 9.5,-4.5 10.5,-10.5z" fill="url(#gDia)" stroke="#1a60d0" stroke-width="0.8"/>

<!-- ===== status icons ===== -->
<rect x="998" y="833" width="9" height="6" fill="#888"/>
<path d="M1008.8,832v8M1007.3,831.8h3M1007.3,840.2h3" stroke="#888" stroke-width="1.2"/>
<path d="M1037,831.5v-1.2h-8.3v10.3h8.3v-1.2" fill="none" stroke="#888" stroke-width="1.4"/>
<path d="M1036.6,833v5M1034.5,834.3l4.2,2.5M1034.5,836.8l4.2,-2.5" stroke="#c00000" stroke-width="1.3"/>
<g fill="#aaa"><rect x="1017" y="829" width="1" height="1"/><rect x="1046" y="829" width="1" height="1"/><rect x="234" y="828" width="1" height="1"/><rect x="565" y="828" width="1" height="1"/><rect x="741" y="828" width="1" height="1"/><rect x="920" y="828" width="1" height="1"/><rect x="1211" y="828" width="1" height="1"/><rect x="1288" y="828" width="1" height="1"/><rect x="1430" y="828" width="1" height="1"/></g>
<path d="M1224.5,831.5h5l2.5,2.5v6.5h-7.5z" fill="#fafafa" stroke="#8a8a8a"/>
<path d="M1238.5,831.5h5l2.5,2.5v6.5h-7.5zM1247.5,831.5h5l2.5,2.5v6.5h-7.5z" fill="#fafafa" stroke="#444"/>
<path d="M1262.5,834l2,-2.5h5.5v9h-7.5zM1270.5,831.5h5.5l2,2.5v6.5h-7.5z" fill="#fafafa" stroke="#8a8a8a"/>
<path d="M1298,835.5h8" stroke="#8a8a8a" stroke-width="1.8"/>
<path d="M1312,835.7h96.5" stroke="#a8a8a8" stroke-width="1.6"/>
<path d="M1333.7,831v10" stroke="#a0a0a0" stroke-width="1.5"/>
<path d="M1360,831v10" stroke="#707070" stroke-width="1.3"/>
<circle cx="1364.6" cy="835.7" r="3.6" fill="#fafafa" stroke="#6a6a6a" stroke-width="1"/>
<path d="M1415,835.7h8M1419,831.7v8" stroke="#8a8a8a" stroke-width="1.8"/>
</svg>

 <div class="a" style="left:0;top:0;width:1489px;height:1px;background:#505050"></div>
 <div class="a" style="left:0;top:0;width:1px;height:850px;background:#666"></div>
 <div class="a" style="left:1487px;top:1px;width:1px;height:849px;background:#c4c4c4"></div><div class="a" style="left:1488px;top:0;width:1px;height:850px;background:#626262"></div>
</div>
</body></html>
